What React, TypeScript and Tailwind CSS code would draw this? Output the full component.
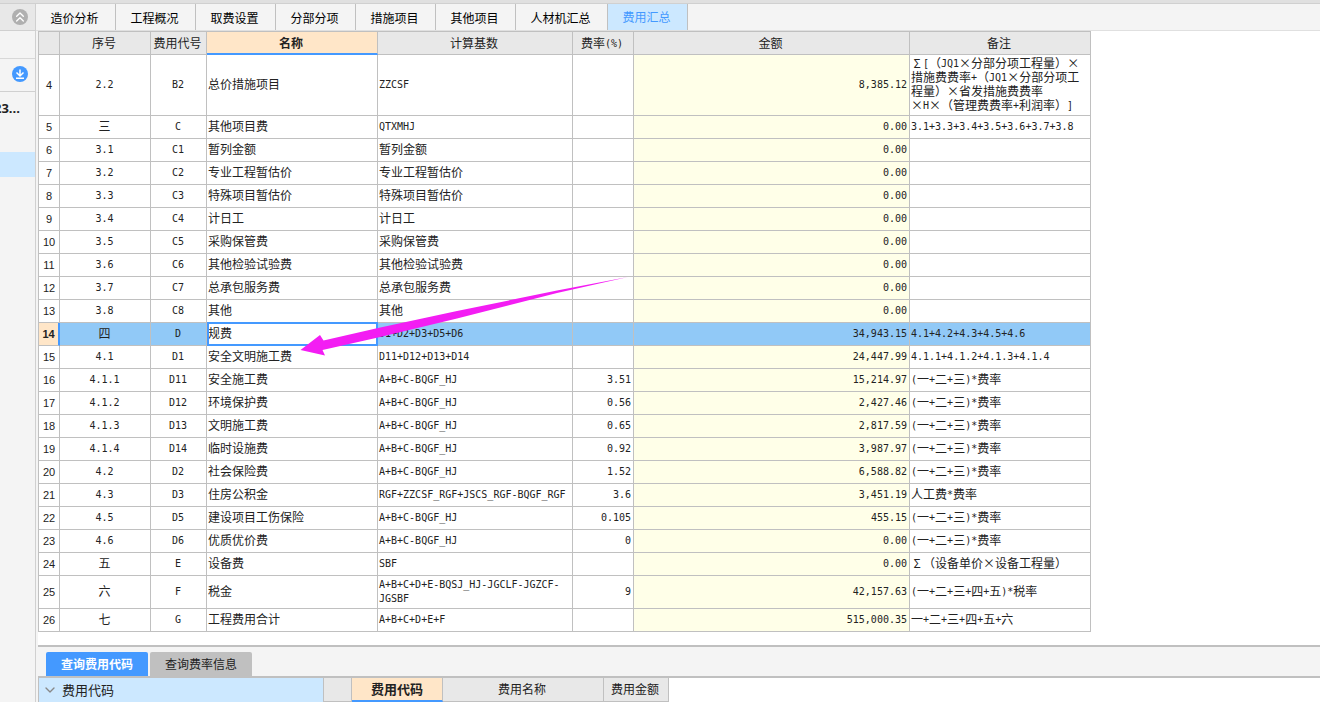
import { useState } from "react"
import { ChevronDown, ChevronsUp } from "lucide-react"

interface FeeRow {
  id: number
  no: string
  code: string
  name: string
  base: string
  rate?: string
  amount: string
  note?: string
}

const TABS = ["造价分析", "工程概况", "取费设置", "分部分项", "措施项目", "其他项目", "人材机汇总", "费用汇总"]

const ROWS: FeeRow[] = [
  {
    id: 4,
    no: "2.2",
    code: "B2",
    name: "总价措施项目",
    base: "ZZCSF",
    amount: "8,385.12",
    note: "Σ[（JQ1×分部分项工程量）×\n措施费费率+（JQ1×分部分项工\n程量）×省发措施费费率\n×H×（管理费费率+利润率）]",
  },
  { id: 5, no: "三", code: "C", name: "其他项目费", base: "QTXMHJ", amount: "0.00", note: "3.1+3.3+3.4+3.5+3.6+3.7+3.8" },
  { id: 6, no: "3.1", code: "C1", name: "暂列金额", base: "暂列金额", amount: "0.00" },
  { id: 7, no: "3.2", code: "C2", name: "专业工程暂估价", base: "专业工程暂估价", amount: "0.00" },
  { id: 8, no: "3.3", code: "C3", name: "特殊项目暂估价", base: "特殊项目暂估价", amount: "0.00" },
  { id: 9, no: "3.4", code: "C4", name: "计日工", base: "计日工", amount: "0.00" },
  { id: 10, no: "3.5", code: "C5", name: "采购保管费", base: "采购保管费", amount: "0.00" },
  { id: 11, no: "3.6", code: "C6", name: "其他检验试验费", base: "其他检验试验费", amount: "0.00" },
  { id: 12, no: "3.7", code: "C7", name: "总承包服务费", base: "总承包服务费", amount: "0.00" },
  { id: 13, no: "3.8", code: "C8", name: "其他", base: "其他", amount: "0.00" },
  { id: 14, no: "四", code: "D", name: "规费", base: "D1+D2+D3+D5+D6", amount: "34,943.15", note: "4.1+4.2+4.3+4.5+4.6" },
  { id: 15, no: "4.1", code: "D1", name: "安全文明施工费", base: "D11+D12+D13+D14", amount: "24,447.99", note: "4.1.1+4.1.2+4.1.3+4.1.4" },
  { id: 16, no: "4.1.1", code: "D11", name: "安全施工费", base: "A+B+C-BQGF_HJ", rate: "3.51", amount: "15,214.97", note: "(一+二+三)*费率" },
  { id: 17, no: "4.1.2", code: "D12", name: "环境保护费", base: "A+B+C-BQGF_HJ", rate: "0.56", amount: "2,427.46", note: "(一+二+三)*费率" },
  { id: 18, no: "4.1.3", code: "D13", name: "文明施工费", base: "A+B+C-BQGF_HJ", rate: "0.65", amount: "2,817.59", note: "(一+二+三)*费率" },
  { id: 19, no: "4.1.4", code: "D14", name: "临时设施费", base: "A+B+C-BQGF_HJ", rate: "0.92", amount: "3,987.97", note: "(一+二+三)*费率" },
  { id: 20, no: "4.2", code: "D2", name: "社会保险费", base: "A+B+C-BQGF_HJ", rate: "1.52", amount: "6,588.82", note: "(一+二+三)*费率" },
  { id: 21, no: "4.3", code: "D3", name: "住房公积金", base: "RGF+ZZCSF_RGF+JSCS_RGF-BQGF_RGF", rate: "3.6", amount: "3,451.19", note: "人工费*费率" },
  { id: 22, no: "4.5", code: "D5", name: "建设项目工伤保险", base: "A+B+C-BQGF_HJ", rate: "0.105", amount: "455.15", note: "(一+二+三)*费率" },
  { id: 23, no: "4.6", code: "D6", name: "优质优价费", base: "A+B+C-BQGF_HJ", rate: "0", amount: "0.00", note: "(一+二+三)*费率" },
  { id: 24, no: "五", code: "E", name: "设备费", base: "SBF", amount: "0.00", note: "Σ（设备单价×设备工程量）" },
  { id: 25, no: "六", code: "F", name: "税金", base: "A+B+C+D+E-BQSJ_HJ-JGCLF-JGZCF-\nJGSBF", rate: "9", amount: "42,157.63", note: "(一+二+三+四+五)*税率" },
  { id: 26, no: "七", code: "G", name: "工程费用合计", base: "A+B+C+D+E+F", amount: "515,000.35", note: "一+二+三+四+五+六" },
]

// Latin runs are half the width of a Chinese character, symbols take a full one
function CellText({ text = "" }: { text?: string }) {
  return (
    <>
      {text.split(/([\x20-\x7e]+|\n|[×Σ])/).map((part, idx) => {
        if (/^[×Σ]$/.test(part)) {
          return (
            <span key={idx} className="inline-block w-3 text-center leading-none">
              {part}
            </span>
          )
        }
        if (/^[\x20-\x7e]+$/.test(part)) {
          return (
            <span key={idx} className="align-[1px] font-['DejaVu_Sans_Mono',monospace] text-[10px] leading-none">
              {part}
            </span>
          )
        }
        return part
      })}
    </>
  )
}

function Sidebar() {
  return (
    <aside className="w-9 shrink-0 border-r border-[#d0d0d0] bg-[#f4f4f4]">
      <div className="flex h-[27px] items-center justify-end border-b border-[#d0d0d0] bg-[#e8e8e8] pr-[7px]">
        <button aria-label="收起" className="flex size-4 items-center justify-center rounded-full bg-[#b0b0b0] text-white">
          <ChevronsUp className="size-4" strokeWidth={2} />
        </button>
      </div>
      <div className="h-7 border-b border-[#d8d8d8]" />
      <div className="flex h-[33px] items-center justify-end border-b border-[#d0d0d0] pr-[7px] pb-0.5">
        <button aria-label="下载" className="flex size-4 items-center justify-center rounded-full bg-[#4499ff] text-white">
          <svg viewBox="0 0 16 16" className="size-4" fill="none" stroke="currentColor" strokeWidth="1.5">
            <path d="M8 3.5V10M4.5 6.5L8 10l3.5-3.5M4 12.2h8" />
          </svg>
        </button>
      </div>
      <div className="flex h-[60px] justify-end overflow-hidden pt-1.5 pr-[15px] font-['Open_Sans',sans-serif] text-[13px] leading-5 font-bold text-[#222222]">
        23...
      </div>
      <div className="h-[25px] bg-[#cce8ff]" />
    </aside>
  )
}

function FeeTable() {
  const [selected, setSelected] = useState(14)
  const th = "h-[23px] border-r border-b border-[#c0c0c0] bg-[#e8e8e8] pr-0.5 font-normal"
  const td = "h-[23px] border-r border-b border-[#c0c0c0] pt-px pr-0.5 pb-[3px] pl-px whitespace-pre"

  return (
    <table className="w-[1053px] table-fixed border-separate border-spacing-0 border-t border-l border-[#c0c0c0] text-xs leading-[14px] text-[#222222] [text-spacing-trim:space-all]">
      <colgroup>
        <col className="w-[21px]" />
        <col className="w-[91px]" />
        <col className="w-[56px]" />
        <col className="w-[171px]" />
        <col className="w-[195px]" />
        <col className="w-[61px]" />
        <col className="w-[276px]" />
        <col className="w-[181px]" />
      </colgroup>
      <thead>
        <tr>
          <th className={th} />
          <th className={th}>序号</th>
          <th className={th}>费用代号</th>
          <th className="h-[23px] border-r border-b-2 border-r-[#c0c0c0] border-b-[#4499ff] bg-[#ffe6c8] pr-0.5 font-bold">名称</th>
          <th className={th}>计算基数</th>
          <th className={th}>
            <CellText text="费率(%)" />
          </th>
          <th className={th}>金额</th>
          <th className={th}>备注</th>
        </tr>
      </thead>
      <tbody>
        {ROWS.map((row) => {
          const active = row.id === selected
          return (
            <tr key={row.id} onClick={() => setSelected(row.id)} className={active ? "bg-[#91c9f7]" : "bg-white"}>
              <td
                className={`h-[23px] border-b border-b-[#c0c0c0] text-center font-['Liberation_Sans',sans-serif] text-[11px] ${
                  active ? "border-r-2 border-r-[#4499ff] bg-[#ffe6c8] font-bold" : "border-r border-r-[#c0c0c0]"
                }`}
              >
                {row.id}
              </td>
              <td className={`${td} text-center`}>
                <CellText text={row.no} />
              </td>
              <td className={`${td} text-center`}>
                <CellText text={row.code} />
              </td>
              <td className={`${td} relative ${active ? "bg-white" : ""}`}>
                <CellText text={row.name} />
                {active && <span className="absolute -top-px -right-px -bottom-px left-0 border-2 border-[#4499ff]" />}
              </td>
              <td className={td}>
                <CellText text={row.base} />
              </td>
              <td className={`${td} text-right`}>
                <CellText text={row.rate} />
              </td>
              <td className={`${td} text-right ${active ? "" : "bg-[#ffffe8]"}`}>
                <CellText text={row.amount} />
              </td>
              <td className={td}>
                <CellText text={row.note} />
              </td>
            </tr>
          )
        })}
      </tbody>
    </table>
  )
}

function QueryPanel() {
  const [tab, setTab] = useState(0)
  const th = "h-6 border-r border-b border-[#c0c0c0] bg-[#e8e8e8] pr-0.5 pb-0.5 text-xs font-normal"

  return (
    <section className="shrink-0 border-t-2 border-[#c0c0c0] bg-[#f4f4f4]">
      <div className="flex gap-0.5 border-b-2 border-[#c0c0c0] pt-[5px] pl-2">
        {["查询费用代码", "查询费率信息"].map((label, idx) => (
          <button
            key={label}
            onClick={() => setTab(idx)}
            className={`h-6 w-[102px] rounded-t-xs text-xs ${
              tab === idx ? "bg-[#4499ff] font-bold text-white" : "bg-[#c0c0c0] text-[#222222]"
            }`}
          >
            {label}
          </button>
        ))}
      </div>
      <div className="flex bg-white">
        <div className="flex h-6 w-[286px] items-center gap-1 border-r border-l border-[#c0c0c0] bg-[#cce8ff] pl-[3px] text-[13px] text-[#222222]">
          <ChevronDown className="size-4 text-[#888888]" />
          费用代码
        </div>
        <table className="w-[345px] table-fixed border-separate border-spacing-0 text-[#222222]">
          <colgroup>
            <col className="w-[28px]" />
            <col className="w-[91px]" />
            <col className="w-[161px]" />
            <col className="w-[65px]" />
          </colgroup>
          <thead>
            <tr>
              <th className={th} />
              <th className="h-6 border-r border-b-2 border-r-[#c0c0c0] border-b-[#4499ff] bg-[#ffe6c8] text-[13px] font-bold">
                费用代码
              </th>
              <th className={th}>费用名称</th>
              <th className={th}>费用金额</th>
            </tr>
          </thead>
        </table>
      </div>
    </section>
  )
}

export default function App() {
  const [tab, setTab] = useState("费用汇总")

  return (
    <div className="flex h-screen flex-col overflow-hidden bg-white font-['Noto_Sans_CJK_SC',sans-serif]">
      <div className="h-1 shrink-0 border-b border-[#d0d0d0] bg-[#e0e0e0]" />
      <div className="flex min-h-0 flex-1">
        <Sidebar />
        <main className="flex min-w-0 flex-1 flex-col">
          <nav className="flex h-[27px] shrink-0 border-b border-[#e0e0e0] bg-[#f4f4f4]">
            {TABS.map((label) => (
              <button
                key={label}
                onClick={() => setTab(label)}
                className={`border-r border-[#c0c0c0] pr-0.5 text-xs ${label.length > 4 ? "w-[92px]" : "w-20"} ${
                  tab === label ? "bg-[#cce8ff] text-[#4499ff]" : "pt-0.5 text-black"
                }`}
              >
                {label}
              </button>
            ))}
          </nav>
          <div className="flex min-h-0 flex-1 flex-col border-l-2 border-[#f4f4f4]">
            <div className="relative min-h-0 flex-1 overflow-hidden">
              <FeeTable />
              {/* callout arrow pointing at row 15 */}
              <svg
                className="pointer-events-none absolute top-[244px] left-[262px] h-[84px] w-[330px]"
                viewBox="0 0 330 84"
                fill="#f31df3"
                aria-hidden="true"
              >
                <path d="M0.5 75 L20 60 L23.5 65.5 L78 53 L157 36 L257 15.5 L328 2 L257 18 L157 43.5 L78 62.5 L22.5 75 L25 80.5 Z" />
              </svg>
            </div>
            <QueryPanel />
          </div>
        </main>
      </div>
    </div>
  )
}
